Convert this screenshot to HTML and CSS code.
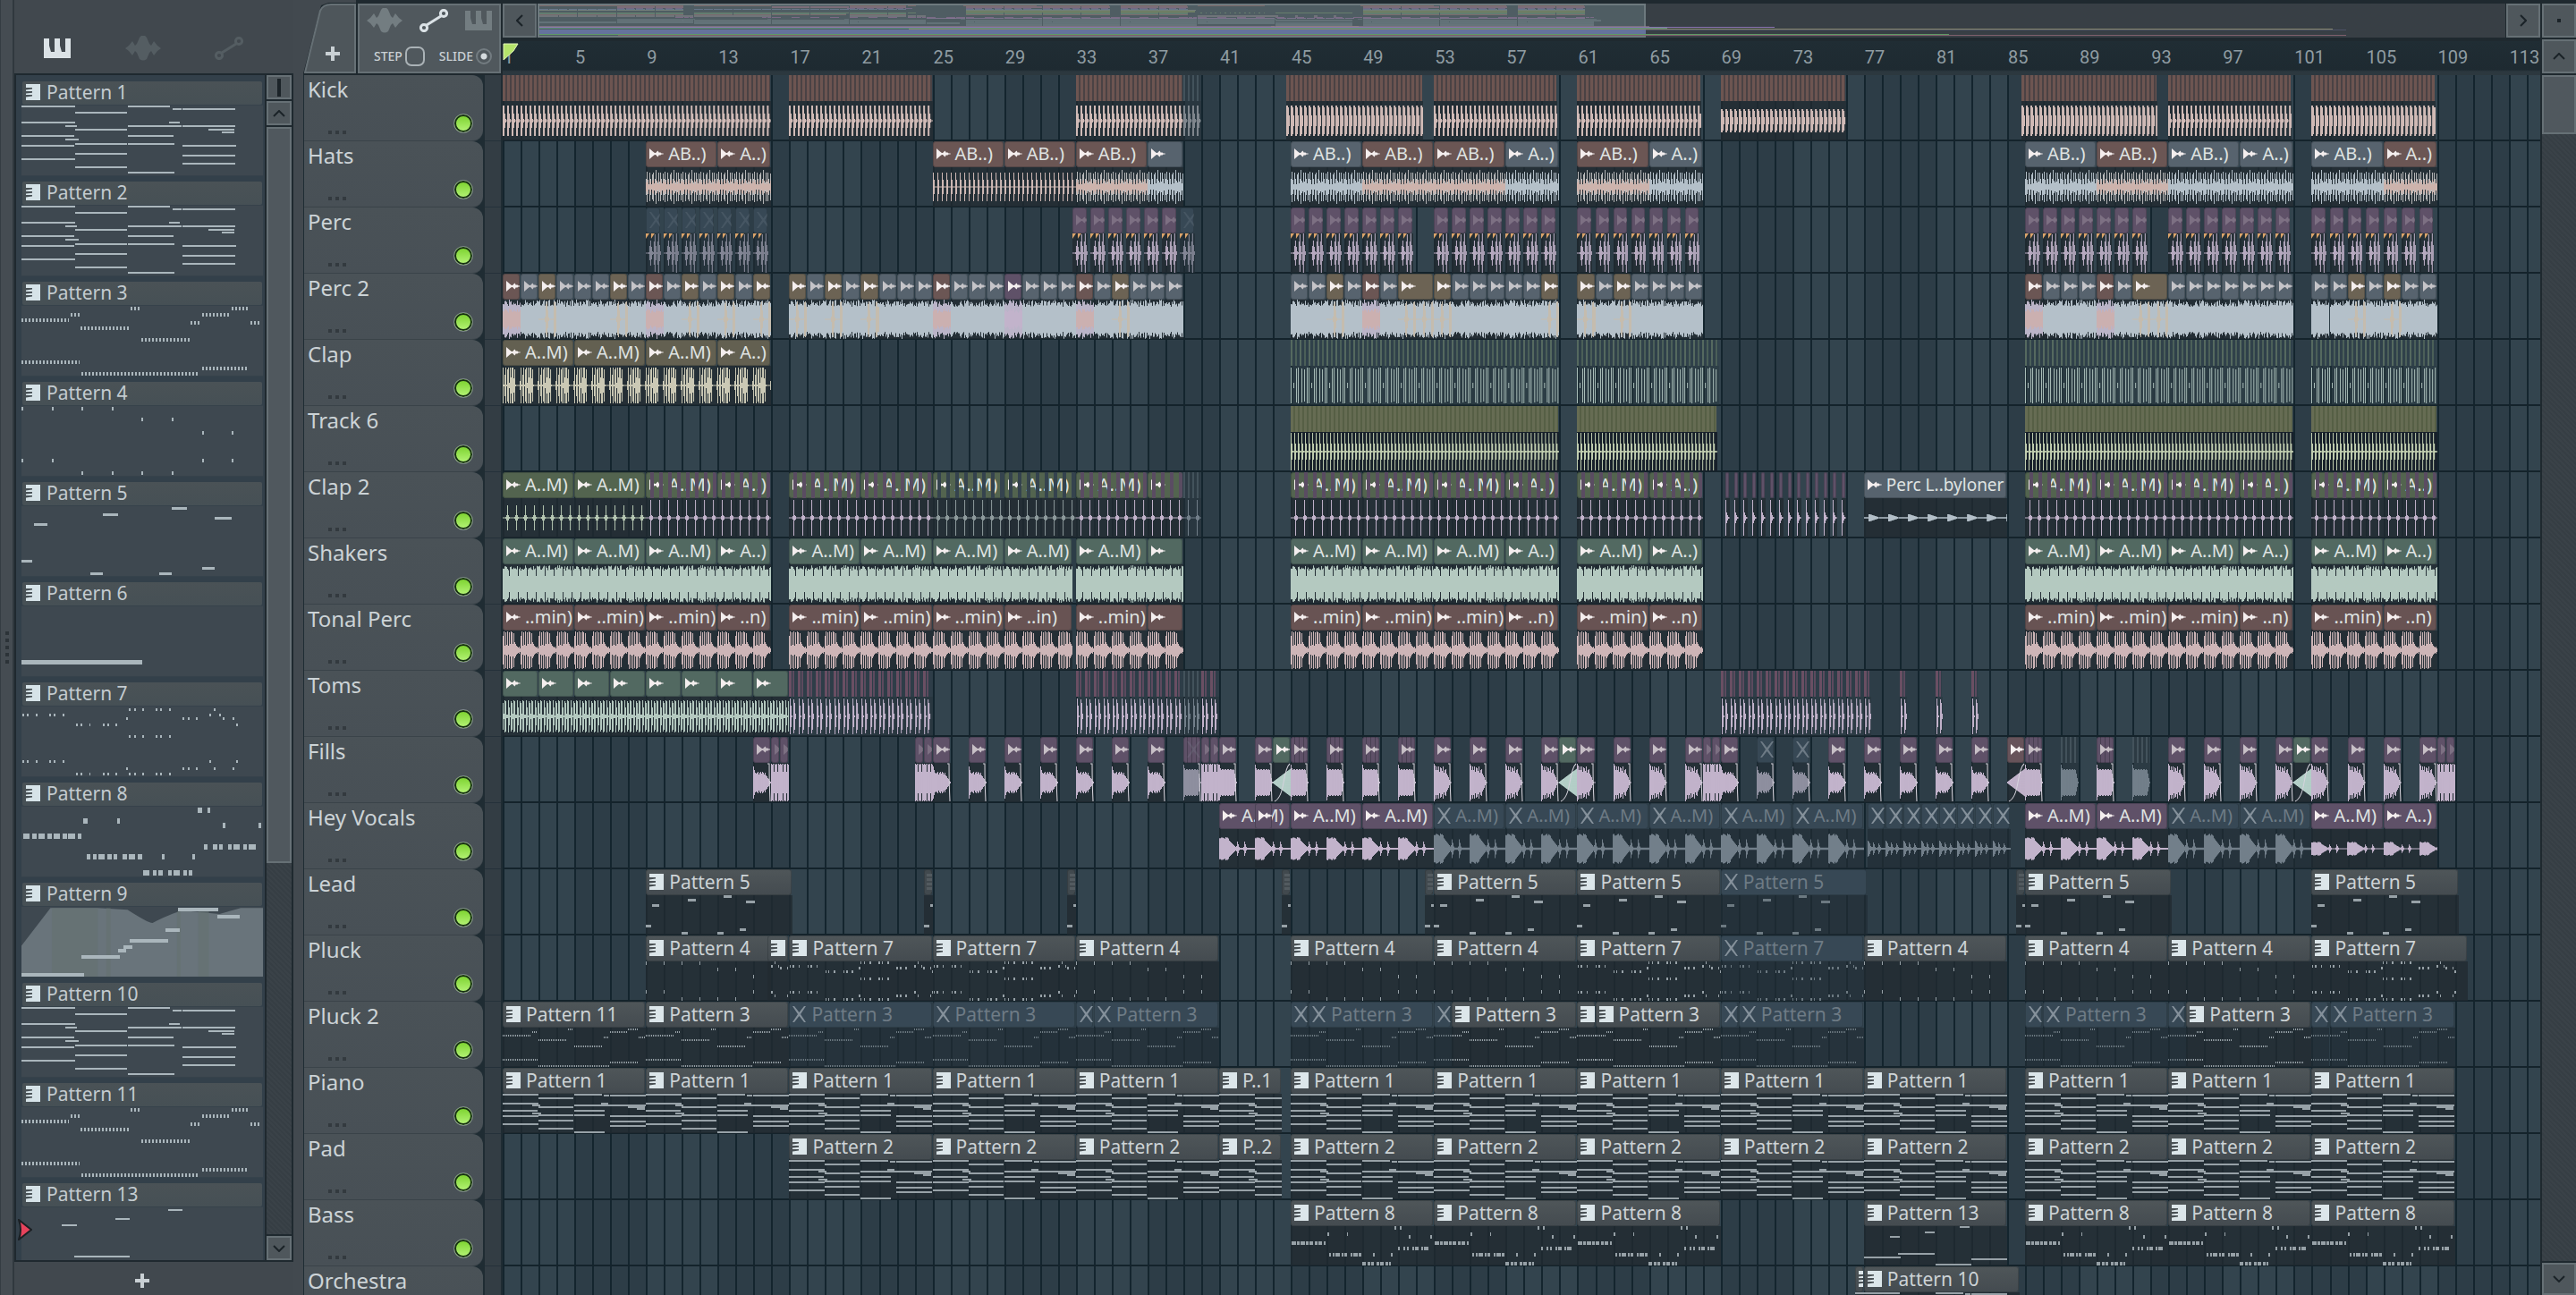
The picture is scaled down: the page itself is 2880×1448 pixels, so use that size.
FILE: index.html
```html
<!DOCTYPE html>
<html lang="en">
<head>
<meta charset="utf-8">
<title>Playlist</title>
<link rel="stylesheet" href="styles.css">
</head>
<body>
<svg class="defs" aria-hidden="true">
  <symbol id="i-piano" viewBox="0 0 30 22"><path d="M0 0H6V8L8 15H12V0H18V8L20 15H24V0H30V22H0Z"/></symbol>
  <symbol id="i-wave" viewBox="0 0 40 28"><path d="M0 14L4 11L8 6L11 11L13 9L16 2Q18-1 20 0Q22-1 24 2L27 9L29 11L32 6L36 11L40 14L36 17L32 22L29 17L27 19L24 26Q20 29 16 26L13 19L11 17L8 22L4 17Z"/></symbol>
  <symbol id="i-auto" viewBox="0 0 32 26"><g fill="none" stroke="currentColor" stroke-width="3"><circle cx="5" cy="21" r="3.6"/><circle cx="27" cy="5" r="3.6"/><path d="M8 18L24 8"/></g></symbol>
  <symbol id="i-keys" viewBox="0 0 16 18"><path d="M0 0H16V18H0V14.500L7 13.500V12H0V10.500L7 9.800V8H0V6.500L7 5.500V4H0Z"/></symbol>
  <symbol id="i-clip" viewBox="0 0 16 12"><path d="M0 0L4 3.500L6 5H7L9.500 2.500L11 5L12 4L13 5.300L16 5.700V6.300L13 6.700L12 8L11 7L9.500 9.500L7 7H6L4 8.500L0 12Z"/></symbol>
  <symbol id="i-x" viewBox="0 0 15 18"><path d="M0 0L2 0L7.500 7L13 0H15L9 9L15 18H13L7.500 11L2 18H0L6 9Z"/></symbol>
</svg>

<div class="app">
  <div class="grip"><i></i><i></i><i></i><i></i><i></i></div>

  <aside class="browser">
    <div class="kinds">
      <button class="kind on" aria-label="Patterns"><svg width="30" height="22"><use href="#i-piano"/></svg></button>
      <button class="kind" aria-label="Audio clips"><svg width="40" height="28"><use href="#i-wave"/></svg></button>
      <button class="kind" aria-label="Automation clips"><svg width="32" height="26"><use href="#i-auto"/></svg></button>
    </div>
    <div class="picker">
      <div class="patterns" id="patterns"></div>
      <div class="vbar">
        <button class="sq" aria-label="Picker options"><svg width="4" height="20"><path d="M0 0H4V20H0Z"/></svg></button>
        <button class="sq" aria-label="Scroll up"><svg width="14" height="8" class="line"><path d="M1 7L7 1L13 7"/></svg></button>
        <div class="rail"><div class="thumb picker-thumb"></div></div>
        <button class="sq" aria-label="Scroll down"><svg width="14" height="8" class="line"><path d="M1 1L7 7L13 1"/></svg></button>
      </div>
      <svg class="cursor" width="16" height="24"><path d="M1 1Q5 12 1 23L15 12Z" fill="#e8435c" stroke="#1b2024" stroke-width="2"/></svg>
    </div>
    <button class="add-pattern" aria-label="Add pattern"><svg width="16" height="16"><path d="M6 0H10V6H16V10H10V16H6V10H0V6H6Z"/></svg></button>
  </aside>

  <main class="playlist">
    <header class="head">
      <button class="tab" aria-label="Add track"><svg class="tab-shape" viewBox="0 0 58 78"><path d="M1 77L18 8Q21 1 30 1H57V77Z"/></svg><svg class="plus" width="16" height="16"><path d="M6 0H10V6H16V10H10V16H6V10H0V6H6Z"/></svg></button>
      <div class="focus">
        <div class="focus-icons">
          <button aria-label="Audio"><svg width="40" height="28"><use href="#i-wave"/></svg></button>
          <button class="on" aria-label="Automation"><svg width="32" height="26"><use href="#i-auto"/></svg></button>
          <button aria-label="Piano roll"><svg width="30" height="22"><use href="#i-piano"/></svg></button>
        </div>
        <div class="switches">
          <label class="step">STEP<input type="checkbox"></label>
          <label class="slide">SLIDE<input type="radio" checked></label>
        </div>
      </div>
      <div class="time">
        <div class="overview">
          <button class="sq" aria-label="Scroll left"><svg width="8" height="14" class="line"><path d="M7 1L1 7L7 13"/></svg></button>
          <div class="map"><div class="window"></div><svg id="map" viewBox="0 0 2198 38" preserveAspectRatio="none"></svg></div>
          <button class="sq" aria-label="Scroll right"><svg width="8" height="14" class="line"><path d="M1 1L7 7L1 13"/></svg></button>
        </div>
        <div class="ruler" id="ruler"><svg class="marker" width="18" height="20"><path d="M1 1H17L12 9L1 19Z" fill="#b5e36b" stroke="#e3f5b8"/></svg></div>
      </div>
      <div class="corner">
        <button class="sq" aria-label="Zoom"><svg width="4" height="4"><path d="M0 0H4V4H0Z"/></svg></button>
        <button class="sq" aria-label="Scroll up"><svg width="14" height="8" class="line"><path d="M1 7L7 1L13 7"/></svg></button>
      </div>
    </header>
    <div class="body">
      <div class="tracks" id="tracks"></div>
      <div class="vbar wide">
        <div class="rail"><div class="thumb track-thumb"></div></div>
        <button class="sq" aria-label="Scroll down"><svg width="14" height="8" class="line"><path d="M1 1L7 7L13 1"/></svg></button>
      </div>
    </div>
  </main>
</div>
<script src="playlist.js"></script>
</body>
</html>
```

FILE: styles.css
```css
* { box-sizing: border-box; }
body { margin: 0; background: #42494f; font-family: "Noto Sans", "Open Sans", sans-serif; color: #c9d0d4; overflow: hidden; }
button { margin: 0; padding: 0; border: 0; background: none; color: inherit; font: inherit; display: flex; align-items: center; justify-content: center; }
svg { display: block; fill: currentColor; flex: none; }
.line path { fill: none; stroke: #1b2328; stroke-width: 2; }
.defs { position: absolute; width: 0; height: 0; }

.app { display: flex; height: 100vh; min-height: 600px; }
.grip { width: 16px; background: #454c52; border-right: 2px solid #30383e; border-left: 1px solid #343c42; display: flex; flex-direction: column; justify-content: center; align-items: center; gap: 4px; flex: none; }
.grip i { width: 4px; height: 4px; background: #2c3338; }

.browser { width: 312px; flex: none; display: flex; flex-direction: column; background: #41484e; }
.kinds { height: 82px; flex: none; padding: 26px 24px 0 0; display: grid; grid-template-columns: repeat(3, 1fr); }
.kind { color: #545d62; }
.kind.on { color: #dbe2e6; }
.picker { flex: 1; min-height: 0; position: relative; display: flex; background: #1f292f; border: 2px solid #1f292f; gap: 2px; }
.patterns { flex: 1; min-width: 0; overflow: hidden; background: #33404a; padding: 7px 2px 0 6px; display: flex; flex-direction: column; gap: 6px; }
.pattern { flex: none; }
.pattern-name { display: flex; align-items: center; gap: 7px; height: 26px; padding: 0 0 2px 4px; margin: 0 1px; font-size: 21px; line-height: 24px; color: #c3cbd0; background: linear-gradient(#4a5256, #465055); border-radius: 2px; }
.pattern-name svg { color: #d6e3e8; }
.pattern-view { display: block; width: 100%; height: 80px; background: #3e4850; border: 1px solid #36424b; border-width: 1px 0; }
.notes { fill: none; stroke: #aab6bc; vector-effect: non-scaling-stroke; shape-rendering: crispEdges; }
.cursor { position: absolute; left: 2px; bottom: 22px; }
.add-pattern { height: 37px; flex: none; padding: 4px 26px 0 0; }

.vbar { width: 28px; flex: none; display: flex; flex-direction: column; gap: 2px; }
.vbar.wide { width: 40px; padding-left: 2px; background: #1f292f; }
.sq { background: #4f575c; border: 2px solid #667075; height: 27px; flex: none; color: #1b2328; }
.rail { flex: 1; background: repeating-linear-gradient(45deg, #363e44 0 2px, #3a4248 2px 4px); }
.thumb { background: #50585e; border: 2px solid #667075; }
.picker-thumb { height: 66.500%; }
.track-thumb { height: 66px; }
.vbar.wide .sq { height: 36px; }

.playlist { flex: 1; min-width: 0; margin-left: 11px; display: flex; flex-direction: column; background: #1f292f; }
.head { height: 84px; flex: none; display: flex; background: #1f292f; }
.tab { width: 58px; height: 78px; margin: 4px 2px 0 1px; flex: none; position: relative; padding: 34px 0 0 6px; }
.tab::before { content: ""; position: absolute; inset: -4px 0 0 -1px; background: #42494f; clip-path: polygon(0 0, 100% 0, 100% 3px, 28px 3px, 20px 6px, 0 82px); }
.tab-shape { position: absolute; inset: 0; fill: #4e565b; stroke: #667075; stroke-width: 2; }
.plus { position: relative; }
.focus { width: 160px; height: 78px; margin: 4px 2px 0 0; flex: none; background: #50585d; border: 2px solid #667075; padding: 3px 8px; display: flex; flex-direction: column; gap: 14px; }
.focus-icons { display: flex; justify-content: space-between; color: #737d81; }
.focus-icons .on { color: #dbe2e6; }
.switches { display: flex; justify-content: space-between; padding-left: 8px; font-size: 14px; font-weight: 500; line-height: 24px; }
.switches label { display: flex; align-items: center; gap: 3px; }
.switches input { appearance: none; margin: 0; border: 2px solid #aab2b6; width: 22px; height: 22px; border-radius: 7px; }
.switches input[type=radio] { width: 18px; height: 18px; border-radius: 50%; border-color: #737c81; background: radial-gradient(circle, #d5dbde 0 3px, transparent 4px); }
.time { flex: 1; min-width: 0; display: flex; flex-direction: column; gap: 2px; }
.overview { height: 44px; display: flex; padding: 4px 0 2px; background: #1f292f; }
.overview .sq { width: 38px; height: 38px; }
.map { flex: 1; min-width: 0; position: relative; background: #383f45; margin: 0 1px; }
.map svg { position: relative; width: 100%; height: 38px; shape-rendering: crispEdges; }
.window { position: absolute; inset: 0 auto 0 0; width: 56.300%; background: #4f5d63; border: 2px solid #6d797e; }
.ruler { height: 38px; position: relative; display: flex; overflow: hidden; background: linear-gradient(#202d34, #1e2a31 32px, #2c383f 34px); font-family: Roboto, "Noto Sans", sans-serif; font-size: 20px; line-height: 36px; color: #8f9ca2; }
.ruler span { flex: none; padding-left: 1px; }
.marker { position: absolute; left: 0; top: 2px; }
.corner { width: 40px; padding: 4px 0 2px 2px; flex: none; display: flex; flex-direction: column; gap: 2px; }
.corner .sq { height: 38px; }

.body { flex: 1; min-height: 0; display: flex; }
.tracks { flex: 1; min-width: 0; overflow: hidden; background: #1f2c33; }
.track { display: flex; height: 74px; }
.track-head { width: 200px; flex: none; margin-left: 1px; background: linear-gradient(#4a5257, #485056); border-radius: 0 12px 12px 0; border-bottom: 1px solid #3a4349; padding: 0 11px 0 4px; display: flex; justify-content: space-between; }
.track-name { font-size: 24px; line-height: 32px; color: #ccd3d6; }
.track-name::after { content: ""; display: block; width: 20px; height: 4px; margin: 30px 0 0 23px; background: repeating-linear-gradient(90deg, #333a3f 0 4px, transparent 4px 8px); }
.led { appearance: none; width: 22px; height: 22px; margin: 43px 0 0; border-radius: 50%; border: 1px solid #7f898c; background: linear-gradient(#78d02a, #b8f57a); box-shadow: inset 0 0 0 2px #173013; }
.gutter { width: 18px; margin: 0 2px; flex: none; background: #333d44; border-bottom: 1px solid #25313a; }
.lane { flex: 1; min-width: 0; position: relative; border-bottom: 2px solid #14232b; padding: 0; }
.clip { position: absolute; top: 0; height: 73px; overflow: hidden; }
.clip-name { height: 29px; padding: 0 0 2px 4px; margin-right: 1px; display: flex; align-items: center; gap: 5px; overflow: hidden; white-space: nowrap; font-size: 20px; line-height: 24px; color: #dfe3e2; border-radius: 3px; box-shadow: inset 0 0 0 1px rgba(20, 26, 32, 0.250); }
.clip-name svg { color: #f4eeee; }
.clip-body { display: block; width: 100%; height: 44px; background: rgba(33, 42, 49, 0.780); }
.wave { fill: none; stroke-width: 1; }
.fade { fill: none; stroke: #d5d3dc; stroke-width: 1; }
.onset { fill: #dba46a; }

.midi .clip-name { font-size: 21px; gap: 6px; background: linear-gradient(#4f5659, #444b50); color: #cdd3d6; }
.midi .clip-name svg { color: #dce6ea; }
.midi .notes { stroke: #97a1a7; }
.long .clip-name { font-size: 19px; }
.c-r .clip-name { background: #6b5654; }
.c-b .clip-name { background: #57636e; }
.c-o .clip-name { background: #6c6354; }
.c-olive .clip-name { background: #636051; }
.c-green .clip-name { background: #53644f; }
.c-teal .clip-name { background: #526961; }
.c-rose .clip-name { background: #67535a; }
.c-rose2 .clip-name { background: #685353; }
.c-p .clip-name { background: #5f5168; }
.c-tan .clip-name { background: #6b5148; }
.dim .clip-name svg { opacity: 0.700; }
.faint .clip-name svg { opacity: 0.200; }
.midi.muted .clip-name, .muted .clip-name { background: #374855; color: #6e7b85; }
.midi.muted .clip-name svg, .muted .clip-name svg { color: #84909a; }
.midi.muted .notes { stroke: #6c7981; }
.muted .clip-body { background: rgba(33, 44, 52, 0.700); }

.s-kick .clip-name { border-radius: 0; box-shadow: none; background: repeating-linear-gradient(90deg, #6d5551 0 3px, #4a4244 3px 5px); }
.s-clap .clip-name { border-radius: 0; box-shadow: none; background: repeating-linear-gradient(90deg, #55695f 0 2px, #30414a 2px 5px, #4b5f58 5px 7px, #2f404a 7px 10px); }
.s-clap .clip-body { background: rgba(38, 54, 61, 0.400); }
.s-t6 .clip-name { border-radius: 0; box-shadow: none; background: repeating-linear-gradient(90deg, #666c53 0 3px, #565f45 3px 5px); }
.s-t6 .clip-body { background: #17202a; }
.s-tom .clip-name { border-radius: 0; box-shadow: none; background: repeating-linear-gradient(90deg, #6a4f63 0 3px, #2d3d48 3px 4px, #5c4a5e 4px 6px, #2e3d48 6px 10px); }
.s-tom .clip-body { background: rgba(38, 50, 58, 0.500); }
.s-dark .clip-name { border-radius: 0; box-shadow: none; background: repeating-linear-gradient(90deg, #43525b 0 2px, #2c3a43 2px 5px); }
.s-dark .clip-body { background: rgba(38, 50, 58, 0.500); }
.s-hit .clip-name { background: repeating-linear-gradient(90deg, #5f5168 0 4px, #483f52 4px 5px); }
.s-cut .clip-name { position: relative; }
.s-cut .clip-name::after { content: ""; position: absolute; inset: 0; background: repeating-linear-gradient(90deg, transparent 0 5px, #5a4c62 5px 9px, transparent 9px 10px); }
.s-cutn .clip-name::after { background: repeating-linear-gradient(90deg, transparent 0 5px, #35434e 5px 9px, transparent 9px 10px); }
.sliver .clip-name { background: #41494e; padding: 0; }
.sliver .clip-name::before { content: ""; width: 6px; height: 20px; margin-left: 3px; background: repeating-linear-gradient(#535b60 0 3px, #41494e 3px 5px); }
```

FILE: playlist.js
```js
const BARS = 113.76;
const PX = 20;
const BLUE = '#b4c0c9', PINK = '#d0bab6', LILAC = '#c2b3cb', GREY = '#727f8a';

/* ---- pattern contents: x, width, y in a 237-high box; span is eight bars ---- */
const chords = [[0,152,4],[151,147,25],[302,118,4],[427,25,11],[455,149,11],[0,152,57],[417,30,57],[123,35,70],[302,151,70],[455,149,70],[151,147,83],[529,73,83],[566,36,90],[0,149,103],[302,128,103],[123,38,116],[151,147,130],[302,130,130],[0,150,136],[455,151,136],[151,147,163],[455,149,169],[0,151,183],[455,149,196],[151,147,209],[302,130,229]];
const arp = [[0,134,49],[138,27,29],[168,135,77],[308,27,10],[340,135,115],[478,27,57],[511,79,29],[594,49,10],[647,28,57],[0,165,192],[170,334,230],[511,132,212]];
const dots = rows => rows.flatMap(([y, xs]) => xs.map(x => [x, 5, y]));
const sx = x => Math.round((x - 72) * 0.843);
const six = [75,91,120,165,181,210], mid = [255,270,299,344,360,388], far = [432,449,478,522,537,567];
const p7 = dots([[30,[...six,702,735]],[188,[...six,702,792]],[62,[...mid,792]],[229,[...mid,...far]],[10,[...far,719]],[103,far],[42,[423,612,630,657,747,780]],[210,[423,612,630,657,719,780]]].map(([y, xs]) => [y, xs.map(sx)]));
const p8rows = [[100,'78-100,109-122,129-151,159-173,180-201,210-224,229-252,261-272'],[48,'280-293,393-401'],[170,'291-302,312-324,330-351,361-374,381-392,412-425,432-453,462-476,543-553,645-653'],[225,'481-503,513-525,531-545,564-576,582-603,614-627,633-645'],[12,'664-677,696-704'],[64,'747-755,867-878'],[136,'684-695,715-728,735-746,765-777,783-805,816-828,834-857']];
const p8 = p8rows.flatMap(([y, s]) => s.split(',').map(r => { const [a, b] = r.split('-').map(Number); return [sx(a), sx(b) - sx(a), y]; }));
const PATTERNS = {
  1: { n: chords, span: 606 }, 2: { n: chords, span: 606 }, 10: { n: chords, span: 606 },
  3: { n: arp, span: 680, dash: 1 }, 11: { n: arp, span: 680, dash: 1 },
  4: { n: dots([[10,[0,85,170,255]],[184,[0,85,510,595]],[228,[170,255,340,425]],[46,[340,425]],[92,[510,595]]]), span: 680, w: 4 },
  5: { n: [[0,30,188],[36,37,62],[195,35,229],[231,42,29],[389,35,229],[426,42,8],[511,35,210],[547,48,41]], span: 780, w: 3 },
  6: { n: [[0,341,190]], span: 606, w: 5 },
  7: { n: p7, span: 606, w: 3 }, 8: { n: p8, span: 690, w: 6 },
  9: { n: [[0,178,230],[170,107,170],[273,23,148],[288,25,136],[306,108,114],[408,39,78],[442,115,10],[553,65,34]], span: 606, w: 4, env: 1 },
  13: { n: [[114,42,62],[265,42,38],[415,40,8],[0,158,188],[149,156,168],[308,156,230],[464,156,198]], span: 620 }
};
const notePath = (p, small) => {
  const d = p.n.map(([x, w, y]) => `M${x} ${y}h${w}`).join('');
  const w = small ? Math.min(p.w || 2, 4) : (p.w || 2);
  const dash = p.dash ? ` stroke-dasharray="${small ? '1 1' : '2 2'}"` : '';
  return `<path class="notes" vector-effect="non-scaling-stroke" stroke-width="${p.dash && !small ? 4 : w}"${dash} d="${d}"/>`;
};
const icon = (id, w, h) => `<svg width="${w}" height="${h}"><use href="#${id}"/></svg>`;

document.getElementById('patterns').innerHTML = [1,2,3,4,5,6,7,8,9,10,11,13].map(k => {
  const p = PATTERNS[k];
  const env = p.env ? '<path fill="#69747b" d="M0 132L82 4H216L300 10Q365 60 372 54Q440 12 465 14L560 24L620 4H683V237H0Z"/><path fill="#64716f" opacity=".6" d="M86 4H216V237H86ZM240 4h12V237h-12ZM440 16h10V237h-10ZM500 14h30V237h-30Z"/>' : '';
  return `<div class="pattern"><div class="pattern-name">${icon('i-keys', 16, 18)}Pattern ${k}</div><svg class="pattern-view" viewBox="0 0 683 237" preserveAspectRatio="none">${env}${notePath(p)}</svg></div>`;
}).join('');

/* ---- ruler ---- */
const ruler = document.getElementById('ruler');
let marks = '';
for (let b = 1; b <= 113; b += 4) marks += `<span style="width:${400 / BARS}%">${b}</span>`;
ruler.insertAdjacentHTML('afterbegin', marks);

/* ---- waveforms: half height for each column; x in pixels within the clip ---- */
const rnd = x => { const s = Math.sin(x * 12.9898 + 4.1) * 43758.5453; return s - Math.floor(s); };
const W = {
  kick: x => [17, 17, 8, 2, 0.5][x % 5],
  kickFat: x => [17, 17, 15, 6, 0][x % 5],
  kickLow: x => [13, 13, 11, 4, 0][x % 5],
  hats: x => [9,17,8,3,16,9,3,14,16,4,9,19,7,5,16,6,16,9,4,15][x % 20],
  hatsIn: x => [5,8,5,2,8,5,2,7,8,3,5,8,4,3,8,3,8,5,3,7][x % 20],
  ticks: x => [16, 8, 0.5, 0.5, 0.5][x % 5],
  perc: x => [0.5,0.5,0.5,1,8,14,7,2,1,13,21,8,1,13,22,9,2][x % 20] || 0,
  full: x => 14 + 8 * rnd(x),
  tint: x => 7 + 5 * rnd(x),
  spark: x => [0.5,0.5,0.5,0.5,0.5,0.5,0.5,3,17,20,10,2,0.5,0.5,0.5,0.5,0.5,19,20,14][x % 20],
  clap: x => [20,1,12,20,1,18,20,3,20,9,20,20,8,18,1,0.5,0.5,0.5,0.5,5][x % 20],
  thin: x => [20,0,0,3,0,0,19,0,20,0,0,0,19,0,0,18,0,0,20,0][x % 20],
  t6: x => [21, 9, 1, 0.7][x % 4],
  soft: x => [0.5,0.5,0.5,1,3,14,3,1,0.5,0.5][x % 10],
  snap: x => [0.5,0.5,0.5,0.5,2,20,3,2,0.5,0.5][x % 10],
  snapOne: x => [20, 6, 3, 1, 0.5][x % 10] || 0,
  dense: x => (x % 10 === 7 ? 9 : 15 + 6 * rnd(x)),
  tonal: x => [16,21,5,20,6,21,5,20,7,21,20,7,19,9,7,5,4,3,4,2][x % 20],
  toms: x => [15,3,18,17,2,2,18,10,1,17][x % 10],
  tomHit: x => [0, 20, 12, 1, 0, 19, 15, 3, 0, 0][x % 10],
  fill: x => [18,14,11,10,11,12,9,11,12,10,12,11,9,11,8,7,5,4,2,1][x % 20],
  fillBig: x => [21,19,14,18,14,18,12,17,16,13,18,11,14,15,10,8,6,3,1,0.5][x % 20],
  block: x => [20,16,14,15,15,14,15,15,14,15,15,14,15,15,14,15,14,10,5,1][x % 20],
  roll: x => [21, 20, 21, 12][x % 4],
  rise: x => 1 + (x % 20) * 0.75,
  vox: x => { const k = x % 40; return k < 11 ? 11 + 2 * rnd(x) : k < 18 ? 20 - k : [2,3,8,5,2,1,1,1,1,2,8,5,2,1,1,1,1,1,1,1,1,1][k - 18]; },
  voxLow: x => W.vox(x) * 0.6,
  voxHi: x => W.vox(x) * 1.3,
  blip: x => [9,8,6,3,2,2,7,5,2,1,1,2,6,4,2,1,1,1,1,1][x % 20],
  shot: x => { const k = (x + 17) % 22; return k < 2 ? 4 : k < 12 ? 4.5 - k * 0.35 : 0.7; }
};
const wavePath = (fn, color, bars, origin) => {
  let d = '';
  const n = Math.round(bars * PX);
  for (let i = 0; i <= n; i++) {
    const a = W[fn](i === n ? n - 1 + origin : i + origin);
    if (a > 0) d += `M${i + 0.5} ${(22 - a).toFixed(1)}V${(22 + a).toFixed(1)}`;
  }
  return `<path class="wave" stroke="${color}" d="${d}"/>`;
};
const FADE = '<path class="fade" d="M16 1H18Q18 24 19 43"/>';
const SWELL = '<path class="fade" d="M2 43Q9 40 12 22T19 1"/>';
const ONSET = '<path class="onset" d="M0 0H4L0 6ZM6 0H10L6 6Z"/>';

const audio = (s, e, cls, label, waves, origin = 0, extra = '') => ({ s, e, cls, label, waves, origin, extra });
const midi = (s, e, k, opt = {}) => ({ s, e, k, cls: 'midi ' + (opt.m ? 'muted ' : '') + (opt.cls || ''), label: opt.label ?? 'Pattern ' + k, from: opt.from || 0 });

const LOOPS = [[0, 15], [16, 31.8], [32, 38], [44, 59], [60, 67], [85, 100], [101, 108]];
const loops = (ranges, full, short, cls, waves) => ranges.flatMap(([a, b]) => {
  const out = [];
  for (let s = a; s < b; s += 4) {
    const e = Math.min(s + 4, b);
    const cut = full === '..min)' && e - s > 3.5 && e - s < 4 ? '..in)' : full;
    out.push(audio(s, e, cls, e - s > 3.5 ? cut : e - s > 2.5 ? short : '', waves));
  }
  return out;
});
const strips = (ranges, cls, waves) => ranges.map(([s, e]) => audio(s, e, cls, null, waves));

const hat = (s, e, c) => audio(s, e, 'c-' + c, e - s > 3.5 ? 'AB..)' : e - s > 2.5 ? 'A..)' : '', c === 'r' ? [['hats', '#b9babb'], ['hatsIn', '#cdb3ac']] : [['hats', BLUE]]);
const percs = (a, b, m) => { const o = []; for (let s = a; s < b; s++) o.push(audio(s, s + 0.84, m ? 'c-p muted faint' : 'c-p faint', '', [['perc', m ? '#8b8d9d' : LILAC]], 0, ONSET)); return o; };
const perc2 = (start, code) => [...code].map((c, i) => c === '_' ? null : audio(start + i, start + i + (code[i + 1] === '_' ? 2 : 1), 'c-' + c + (c === 'b' ? ' dim' : ''), '',
  c === 'b' ? [['full', BLUE]] : c === 'o' ? [['full', BLUE], ['spark', '#c5bcae']] : [['full', '#bab4c8'], ['tint', c === 'r' ? '#cbb0b0' : '#c2b3cb']], i * 20)).filter(Boolean);
const fills = (list, fn, extra = '') => list.map(s => audio(s, s + 1, 'c-p dim ' + extra, '', [[fn, extra ? '#8e8f9f' : LILAC]], 0, FADE));
const dims = list => list.map(s => audio(s, s + 0.5, 'c-p faint', '', [['roll', LILAC]]));
const rises = list => list.map(s => audio(s, s + 1, 'c-teal', '', [['rise', '#b4cfc8']], 0, SWELL));
const vox = (s, e, m, fn = 'vox') => audio(s, e, m ? 'c-p muted' : 'c-p', e - s > 3.5 ? 'A..M)' : 'A..)', [[m ? 'voxHi' : fn, m ? GREY : LILAC]]);
const each = (list, f) => list.map(f);
const sliver = s => midi(s, s + 0.5, 5, { label: '', cls: 'sliver' });

const TRACKS = [
  ['Kick', [...strips([[0, 15], [16, 24], [32, 38]], 's-kick', [['kick', PINK]]), ...strips([[38, 39]], 's-dark', [['kick', '#7f868d']]),
    ...strips([[43.75, 51.4], [84.8, 92.4], [101, 107.9]], 's-kick', [['kickFat', PINK]]), ...strips([[52, 58.9], [60, 66.9], [93, 99.9]], 's-kick', [['kick', PINK]]), ...strips([[68, 75]], 's-kick', [['kickLow', PINK]])]],
  ['Hats', [hat(8, 12, 'r'), hat(12, 15, 'r'), audio(24, 28, 'c-r', 'AB..)', [['ticks', PINK]]), audio(28, 32, 'c-r', 'AB..)', [['ticks', PINK]]), hat(32, 36, 'r'), hat(36, 38, 'b'),
    hat(44, 48, 'b'), hat(48, 52, 'r'), hat(52, 56, 'r'), hat(56, 59, 'b'), hat(60, 64, 'r'), hat(64, 67, 'b'), hat(85, 89, 'b'), hat(89, 93, 'r'), hat(93, 97, 'b'), hat(97, 100, 'b'), hat(101, 105, 'b'), hat(105, 108, 'r')]],
  ['Perc', [...percs(8, 15, 1), ...percs(31.8, 37.8), ...percs(37.8, 38.8, 1), ...percs(44, 51), ...percs(52, 59), ...percs(60, 67), ...percs(85, 92), ...percs(93, 100), ...percs(101, 108)]],
  ['Perc 2', [...perc2(0, 'rbobbbobrbobobo'), ...perc2(16, 'obobobbbrbbbpbbb'), ...perc2(32, 'rbobbb'), ...perc2(44, 'bbobrbo_obbbbbo'), ...perc2(60, 'obobbbb'), ...perc2(85, 'rbbbrbo_bbbbbbb'), ...perc2(101, 'bbobobb')]],
  ['Clap', [...loops([[0, 15]], 'A..M)', 'A..)', 'c-olive', [['clap', '#cbc9b5']]), ...strips([[44, 59], [60, 67.9], [85, 100], [101, 108]], 's-clap', [['thin', '#a9bdb8']])]],
  ['Track 6', strips([[44, 59], [60, 67.8], [85, 100], [101, 108]], 's-t6', [['t6', '#c0cdaf']])],
  ['Clap 2', [...loops([[0, 8]], 'A..M)', 'A..)', 'c-green', [['soft', '#b5c6b2']]), ...loops([[8, 15], [16, 24]], 'A..M)', 'A..)', 'c-green s-cut', [['snap', LILAC]]),
    ...loops([[24, 32]], 'A..M)', 'A..)', 'c-green s-cut s-cutn', [['snap', '#8d9a9c']]), ...loops([[32, 38]], 'A..M)', 'A..)', 'c-green s-cut', [['snap', LILAC]]), ...strips([[38, 39]], 's-dark', [['snap', GREY]]),
    ...loops([[44, 59], [60, 67], [85, 100], [101, 108]], 'A..M)', 'A..)', 'c-green s-cut', [['snap', LILAC]]),
    ...each([...Array(14).keys()], i => audio(68.25 + i / 2, 68.5 + i / 2, 's-hit', null, [['snapOne', LILAC]])),
    audio(76, 84, 'c-b long', 'Perc L..byloner', [['shot', BLUE]])]],
  ['Shakers', loops(LOOPS, 'A..M)', 'A..)', 'c-teal', [['dense', '#b4c9c0']])],
  ['Tonal Perc', loops(LOOPS, '..min)', '..n)', 'c-rose2', [['tonal', '#cdb5b7']])],
  ['Toms', [...each([0,2,4,6,8,10,12,14], s => audio(s, s + 2, 'c-teal', '', [['toms', '#b4c9c0']])), ...strips([[16, 24], [32, 38], [39, 40], [68, 76.4], [78, 78.4], [80, 80.4], [82, 82.4]], 's-tom', [['tomHit', LILAC]]), ...strips([[38, 39]], 's-dark', [['tomHit', GREY]])]],
  ['Fills', [...fills([14, 24, 26, 28, 30, 32, 34, 36, 68, 74, 76, 78, 80, 82], 'fill'), ...dims([15, 15.5, 23, 23.5, 39, 39.5, 67, 67.5, 108, 108.5]), ...fills([70, 72], 'fill', 'muted'), ...fills([38], 'block', 'muted faint s-hit'),
    ...fills([40, 42], 'block'), ...fills([44, 46, 48, 50, 85, 89], 'block').map(c => ({ ...c, cls: 'c-p dim s-hit' })), ...strips([[87, 88], [91, 92]], 's-dark', [['block', GREY]]),
    ...fills([52, 54, 56, 58, 60, 62, 64, 66, 93, 95, 97, 99, 101, 103, 105, 107], 'fillBig'), ...rises([43, 59, 100]), audio(84, 85, 'c-rose', '', [['rise', LILAC]], 0, SWELL)]],
  ['Hey Vocals', [vox(40, 44), audio(42, 43, 'c-p', '', [['vox', LILAC]]), vox(44, 48), vox(48, 52), ...each([52, 56, 60, 64, 68, 72], s => vox(s, s + 4, 1)), ...each([0,1,2,3,4,5,6,7], i => audio(76.2 + i, 77.2 + i, 'c-p muted', '', [['blip', GREY]])),
    vox(85, 89), vox(89, 93), vox(93, 97, 1), vox(97, 101, 1), vox(101, 105, 0, 'voxLow'), vox(105, 108, 0, 'voxLow')]],
  ['Lead', [midi(8, 16.2, 5), ...each([23.5, 31.5, 43.5, 51.5, 84.5], sliver), midi(52, 60, 5), midi(60, 68, 5), midi(68, 76.2, 5, { m: 1 }), midi(85, 93.2, 5), midi(101, 109.2, 5)]],
  ['Pluck', [midi(8, 15, 4), midi(14.8, 16, 7, { label: '', from: 6.8 }), midi(16, 24, 7), midi(24, 32, 7), midi(32, 40, 4), midi(44, 52, 4), midi(52, 60, 4), midi(60, 68, 7), midi(68, 76, 7, { m: 1 }), midi(76, 84, 4), midi(85, 93, 4), midi(93, 101, 4), midi(101, 109.7, 7)]],
  ['Pluck 2', [midi(0, 8, 11), midi(8, 16, 3), midi(16, 24, 3, { m: 1 }), midi(24, 32, 3, { m: 1 }), midi(32, 33, 3, { m: 1, label: '' }), midi(33, 40, 3, { m: 1, from: 1 }), midi(44, 45, 3, { m: 1, label: '' }), midi(45, 52, 3, { m: 1, from: 1 }),
    midi(52, 53, 3, { m: 1, label: '' }), midi(53, 60, 3, { from: 1 }), midi(60, 61, 3, { label: '' }), midi(61, 68, 3, { from: 1 }), midi(68, 69, 3, { m: 1, label: '' }), midi(69, 76, 3, { m: 1, from: 1 }),
    midi(85, 86, 3, { m: 1, label: '' }), midi(86, 93, 3, { m: 1, from: 1 }), midi(93, 94, 3, { m: 1, label: '' }), midi(94, 101, 3, { from: 1 }), midi(101, 102, 3, { m: 1, label: '' }), midi(102, 109, 3, { m: 1, from: 1 })]],
  ['Piano', [...each([0, 8, 16, 24, 32, 44, 52, 60, 68, 76, 85, 93, 101], s => midi(s, s + 8, 1)), midi(40, 43.5, 1, { label: 'P..1' })]],
  ['Pad', [...each([16, 24, 32, 44, 52, 60, 68, 76, 85, 93, 101], s => midi(s, s + 8, 2)), midi(40, 43.5, 2, { label: 'P..2' })]],
  ['Bass', [...each([44, 52, 60, 85, 93, 101], s => midi(s, s + 8, 8)), midi(76, 84, 13)]],
  ['Orchestra', [midi(75.5, 76, 10, { label: '' }), midi(76, 84.7, 10)]]
];

const clipHtml = c => {
  const len = c.e - c.s;
  const pos = `left:${(c.s / BARS * 100).toFixed(3)}%;width:${(len / BARS * 100).toFixed(3)}%`;
  const muted = c.cls.includes('muted');
  let name = '', inner, box;
  if (c.k) {
    const p = PATTERNS[c.k], unit = p.span / 8;
    box = `${c.from * unit} 0 ${len * unit} 237`;
    inner = notePath(p, true);
    if (!c.cls.includes('sliver')) name = (muted ? icon('i-x', 15, 18) : icon('i-keys', 16, 18)) + (c.label ? `<span>${c.label}</span>` : '');
  } else {
    box = `0 0 ${Math.round(len * PX)} 44`;
    inner = c.waves.map(([fn, col]) => wavePath(fn, col, len, c.origin)).join('') + c.extra;
    if (c.label !== null) name = (muted ? icon('i-x', 15, 18) : icon('i-clip', 16, 12)) + (c.label ? `<span>${c.label}</span>` : '');
  }
  return `<div class="clip ${c.cls}" style="${pos}"><div class="clip-name">${name}</div><svg class="clip-body" viewBox="${box}" preserveAspectRatio="none">${inner}</svg></div>`;
};

const lines = `repeating-linear-gradient(90deg,#14252e 0 2px,transparent 2px ${100 / BARS}%)`;
const bands = `repeating-linear-gradient(90deg,#33444e 0 ${400 / BARS}%,#2d3d47 ${400 / BARS}% ${800 / BARS}%)`;
document.getElementById('tracks').innerHTML = TRACKS.map(([name, clips]) =>
  `<section class="track"><div class="track-head"><span class="track-name">${name}</span><input class="led" type="checkbox" checked aria-label="${name} on"></div><div class="gutter"></div><div class="lane" style="background:${lines},${bands}">${clips.map(clipHtml).join('')}</div></section>`).join('');

/* ---- song overview ---- */
const mapColors = ['#8a6f6c','#8b7380','#7d6d92','#6f7f96','#7d8a80','#788a66','#6f8a70','#64897a','#8a6f72','#7a7c80','#8a6f92','#8a7a9a','#64747b','#68787e','#68787e','#6a7a80','#68787e','#6c7c82','#8d8368'];
const rect = (x, y, w, h, c, o = 1) => `<rect x="${x}" y="${y}" width="${w}" height="${h}" fill="${c}" opacity="${o}"/>`;
let map = '';
TRACKS.forEach(([, clips], i) => clips.forEach(c => { map += rect((2 + c.s * 10.82).toFixed(1), 2 + i * 1.25, ((c.e - c.s) * 10.82 - 1).toFixed(1), 1.25, mapColors[i], 0.75); }));
map += rect(2, 25, 1240, 1, '#97808c', 0.6) + rect(2, 26, 1380, 1, '#8b74b0') + rect(2, 27, 1260, 1, '#5b9078') + rect(2, 29, 1236, 5, '#65739c') + rect(415, 28, 1590, 1, '#87876a') + rect(1238, 29, 782, 1, '#4d5266') + rect(2, 34, 1575, 1, '#5f9a66') + rect(90, 35, 1930, 1, '#7f606c');
document.getElementById('map').innerHTML = map;
```
